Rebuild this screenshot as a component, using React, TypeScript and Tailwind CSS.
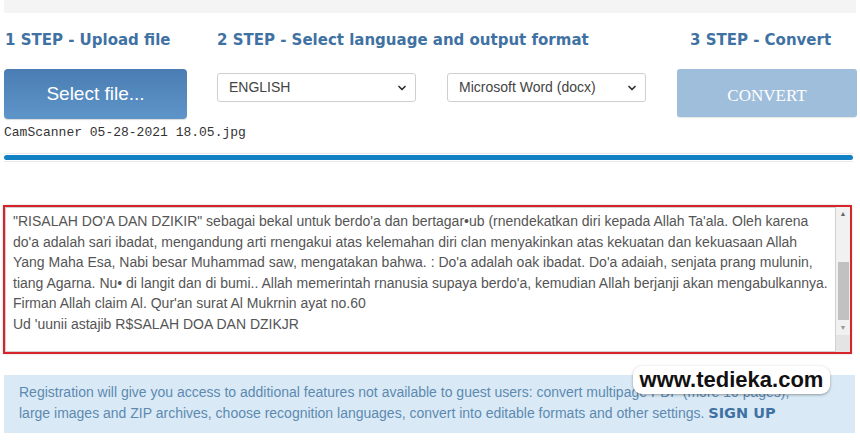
import { ChevronDown } from 'lucide-react';

const lines = [
  `"RISALAH DO'A DAN DZIKIR" sebagai bekal untuk berdo'a dan bertagar•ub (rnendekatkan diri kepada Allah Ta'ala. Oleh karena`,
  `do'a adalah sari ibadat, mengandung arti rnengakui atas kelemahan diri clan menyakinkan atas kekuatan dan kekuasaan Allah`,
  `Yang Maha Esa, Nabi besar Muhammad saw, mengatakan bahwa. : Do'a adalah oak ibadat. Do'a adaiah, senjata prang mulunin,`,
  `tiang Agarna. Nu• di langit dan di bumi.. Allah memerintah rnanusia supaya berdo'a, kemudian Allah berjanji akan mengabulkannya.`,
  `Firman Allah claim Al. Qur'an surat Al Mukrnin ayat no.60`,
  `Ud 'uunii astajib R$SALAH DOA DAN DZIKJR`,
];

function Select({ label }: { label: string }) {
  return (
    <div className="w-[199px] h-[29px] mt-[4px] border border-[#cfcfcf] rounded-[3px] bg-white flex items-center justify-between pl-[11px] pr-[7px] text-[14px] text-[#444] font-['Liberation_Sans',sans-serif]">
      <span>{label}</span>
      <ChevronDown className="w-[12px] h-[12px] text-[#333]" strokeWidth={3.5} />
    </div>
  );
}

export default function App() {
  return (
    <div className="relative w-[860px] h-[441px] bg-white overflow-hidden font-['Liberation_Sans',sans-serif]">
      {/* top strip */}
      <div className="ml-[4px] w-[852px] h-[13px] bg-[#f4f4f4]" />

      {/* step titles */}
      <div className="mt-[17px] flex text-[15px] leading-[20px] font-bold text-[#3f72a3] font-['DejaVu_Sans',sans-serif]">
        <div className="w-[217px] pl-[5px]">1 STEP - Upload file</div>
        <div className="w-[473px]">2 STEP - Select language and output format</div>
        <div>3 STEP - Convert</div>
      </div>

      {/* controls */}
      <div className="mt-[19px] flex items-start">
        <button className="ml-[4px] w-[183px] h-[50px] rounded-[4px] bg-gradient-to-b from-[#4a7db3] to-[#5e95c9] text-white text-[19px] shadow-[0_1px_1px_rgba(0,0,0,0.15)]">
          Select file...
        </button>
        <div className="ml-[30px]">
          <Select label="ENGLISH" />
        </div>
        <div className="ml-[31px]">
          <Select label="Microsoft Word (docx)" />
        </div>
        <button className="ml-[31px] w-[180px] h-[48px] pt-[6px] rounded-[3px] bg-[#9fbedb] text-white text-[17px] font-['Liberation_Serif',serif] shadow-[0_1px_1px_rgba(0,0,0,0.1)]">
          CONVERT
        </button>
      </div>

      {/* filename */}
      <div className="mt-[6px] ml-[4px] text-[13px] leading-[15px] text-[#333] font-['Liberation_Mono',monospace]">
        CamScanner 05-28-2021 18.05.jpg
      </div>

      {/* progress bar */}
      <div className="mt-[13px] ml-[4px] w-[849px] h-[9px] border-y border-[#e9e9e9] flex items-center">
        <div className="w-full h-[5px] rounded-full bg-[#1282c4]" />
      </div>

      {/* result textarea */}
      <div className="mt-[43px] ml-[3px] w-[849px] h-[149px] border-2 border-[#d9232b] shadow-[0_0_2px_rgba(0,0,0,0.2)] flex">
        <div className="flex-1 border border-[#d0d0d0] pl-[7px] pt-[3px] text-[14px] leading-[20.6px] text-[#555] whitespace-nowrap overflow-hidden">
          {lines.map((l) => (
            <div key={l}>{l}</div>
          ))}
        </div>
        <div className="w-[14px] bg-[#f1f1f1] flex flex-col items-center">
          <div className="h-[14px] flex items-center justify-center text-[7px] text-[#666]">▲</div>
          <div className="w-[11px] mt-[41px] h-[58px] bg-[#c1c1c1]" />
          <div className="mt-[1px] h-[14px] flex items-center justify-center text-[7px] text-[#999]">▼</div>
          <div className="flex-1 w-full bg-[#e4e4e4]" />
        </div>
      </div>

      {/* registration info */}
      <div className="mt-[21px] ml-[4px] w-[851px] h-[58px] bg-[#d9eaf6] pl-[15px] pt-[7px] text-[14px] leading-[21px] text-[#5d89b0]">
        <div>
          Registration will give you access to additional features not available to guest users: convert multipage PDF (more 10 pages),
        </div>
        <div>
          large images and ZIP archives, choose recognition languages, convert into editable formats and other settings.{' '}
          <span className="font-bold text-[#3f72a3] font-['DejaVu_Sans',sans-serif] text-[14.5px]">SIGN UP</span>
        </div>
      </div>

      {/* watermark */}
      <div className="absolute left-[633px] top-[366px] w-[197px] h-[28px] rounded-[9px] bg-white shadow-[0_1px_3px_rgba(0,0,0,0.35)] flex items-center justify-center text-[22px] font-bold text-[#111] leading-none">
        www.tedieka.com
      </div>
    </div>
  );
}
